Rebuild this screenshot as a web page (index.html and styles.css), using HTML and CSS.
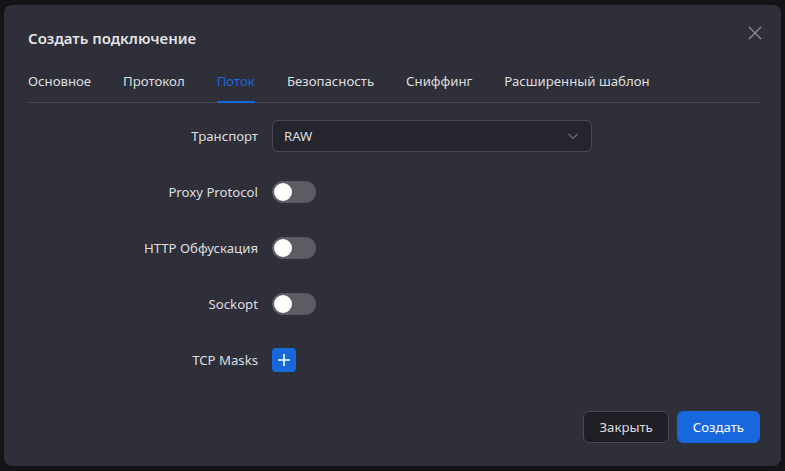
FILE: index.html
```html
<!DOCTYPE html>
<html lang="ru">

<head>
    <meta charset="UTF-8">
    <meta name="viewport" content="width=device-width, initial-scale=1.0">
    <title>Создать подключение</title>
    <link rel="stylesheet" href="styles.css">
</head>

<body>
    <div class="modal">
        <div class="modal-header">
            <div class="modal-title">Создать подключение</div>
            <button class="modal-close" aria-label="Close">
                <svg width="14" height="14" viewBox="0 0 14 14">
                    <path d="M1 1L13 13M13 1L1 13" stroke="currentColor" stroke-width="1.4" fill="none" />
                </svg>
            </button>
        </div>

        <div class="tabs">
            <div class="tab">Основное</div>
            <div class="tab">Протокол</div>
            <div class="tab active">Поток</div>
            <div class="tab">Безопасность</div>
            <div class="tab">Сниффинг</div>
            <div class="tab">Расширенный шаблон</div>
        </div>

        <div class="form">
            <div class="form-row">
                <label class="form-label">Транспорт</label>
                <div class="select">
                    <span>RAW</span>
                    <svg class="select-arrow" width="12" height="12" viewBox="0 0 12 12">
                        <path d="M1.5 4L6 8.5L10.5 4" stroke="currentColor" stroke-width="1.2" fill="none" />
                    </svg>
                </div>
            </div>
            <div class="form-row">
                <label class="form-label">Proxy Protocol</label>
                <div class="switch"><span class="knob"></span></div>
            </div>
            <div class="form-row">
                <label class="form-label">HTTP Обфускация</label>
                <div class="switch"><span class="knob"></span></div>
            </div>
            <div class="form-row">
                <label class="form-label">Sockopt</label>
                <div class="switch"><span class="knob"></span></div>
            </div>
            <div class="form-row">
                <label class="form-label">TCP Masks</label>
                <button class="add-btn" aria-label="Add">
                    <svg width="14" height="14" viewBox="0 0 14 14">
                        <path d="M7 1V13M1 7H13" stroke="currentColor" stroke-width="1.6" fill="none" />
                    </svg>
                </button>
            </div>
        </div>

        <div class="modal-footer">
            <button class="btn">Закрыть</button>
            <button class="btn btn-primary">Создать</button>
        </div>
    </div>
</body>

</html>
```

FILE: styles.css
```css
html, body {
    margin: 0;
    height: 100%;
}
body {
    background: #141417;
    font-family: "Noto Sans", "Segoe UI", Arial, sans-serif;
    font-size: 13.2px;
    color: rgba(255, 255, 255, 0.85);
    padding: 5px 4px;
    box-sizing: border-box;
}
.modal {
    background: #2f2f3a;
    border-radius: 8px;
    height: 461px;
    padding: 20px 21px 23px 24px;
    box-sizing: border-box;
    display: flex;
    flex-direction: column;
}
.modal-header {
    display: flex;
    justify-content: space-between;
    align-items: flex-start;
    height: 26px;
}
.modal-title {
    font-size: 15px;
    font-weight: 600;
    line-height: 26px;
    color: rgba(255, 255, 255, 0.88);
}
.modal-close {
    background: none;
    border: none;
    padding: 0;
    margin: 1px -2px 0 0;
    color: #8c8c96;
    display: flex;
    cursor: pointer;
}

.tabs {
    display: flex;
    gap: 32px;
    margin-top: 11px;
    border-bottom: 1px solid #45454f;
}
.tab {
    padding: 10px 0 12px;
    cursor: pointer;
    position: relative;
    color: rgba(255, 255, 255, 0.85);
}
.tab.active {
    color: #1668dc;
}
.tab.active::after {
    content: "";
    position: absolute;
    left: 0;
    right: 0;
    bottom: -1px;
    height: 2px;
    background: #1668dc;
}

.form {
    padding-top: 17px;
    display: flex;
    flex-direction: column;
    gap: 24px;
    flex: 1;
}
.form-row {
    display: flex;
    align-items: center;
    height: 32px;
}
.form-label {
    width: 244px;
    padding-right: 14px;
    text-align: right;
    box-sizing: border-box;
    flex-shrink: 0;
}
.select {
    width: 320px;
    height: 32px;
    box-sizing: border-box;
    border: 1px solid #4a4a57;
    border-radius: 6px;
    background: #25252e;
    display: flex;
    align-items: center;
    justify-content: space-between;
    padding: 0 12px 0 11px;
}
.select-arrow {
    color: #6e6e78;
}
.switch {
    width: 44px;
    height: 22px;
    border-radius: 11px;
    background: #5c5c64;
    position: relative;
}
.knob {
    position: absolute;
    left: 2px;
    top: 2px;
    width: 18px;
    height: 18px;
    border-radius: 50%;
    background: #fff;
}
.add-btn {
    width: 24px;
    height: 24px;
    border: none;
    border-radius: 4px;
    background: #1668dc;
    color: #fff;
    padding: 0;
    display: flex;
    align-items: center;
    justify-content: center;
    cursor: pointer;
}

.modal-footer {
    display: flex;
    justify-content: flex-end;
    gap: 8px;
}
.btn {
    height: 32px;
    padding: 0 15px;
    border-radius: 6px;
    border: 1px solid #4a4a56;
    background: #1f1f25;
    color: rgba(255, 255, 255, 0.85);
    font-family: inherit;
    font-size: 13.2px;
    cursor: pointer;
}
.btn-primary {
    background: #1668dc;
    border-color: #1668dc;
    color: #fff;
}
```
